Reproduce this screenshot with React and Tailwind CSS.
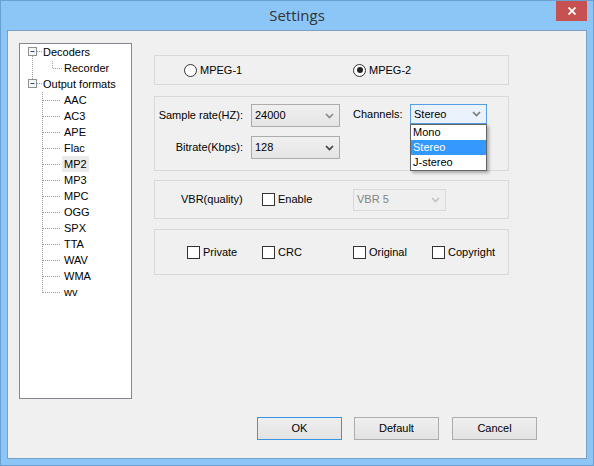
import React from "react";

function Chevron({ color = "#3f3f3f" }) {
  return (
    <svg width="9" height="6" viewBox="0 0 9 6">
      <path d="M1 1 L4.5 4.5 L8 1" fill="none" stroke={color} strokeWidth="1.7" />
    </svg>
  );
}

function Checkbox() {
  return <span className="block w-[13px] h-[13px] border border-[#333333] bg-white shrink-0" />;
}

function Radio({ checked }) {
  return (
    <span className="flex w-[13px] h-[13px] rounded-full border border-[#333333] bg-white shrink-0 items-center justify-center">
      {checked ? <span className="block w-[6px] h-[6px] rounded-full bg-[#222222]" /> : null}
    </span>
  );
}

function TreeLines() {
  const kids = [];
  for (let i = 3; i <= 15; i++) {
    const y = 8 + 16 * i + 0.5;
    kids.push(<line key={i} x1="23" y1={y} x2="41" y2={y} />);
  }
  return (
    <svg className="absolute left-0 top-0" width="111" height="354" viewBox="0 0 111 354">
      <g stroke="#9a9a9a" strokeWidth="1" strokeDasharray="1 1" fill="none">
        <line x1="12.5" y1="12" x2="12.5" y2="35" />
        <line x1="17" y1="7.5" x2="22" y2="7.5" />
        <line x1="17" y1="39.5" x2="22" y2="39.5" />
        <line x1="32.5" y1="17" x2="32.5" y2="25" />
        <line x1="33" y1="24.5" x2="43" y2="24.5" />
        <line x1="22.5" y1="48" x2="22.5" y2="249" />
        {kids}
      </g>
      <rect x="8.5" y="3.5" width="8" height="8" fill="#f6f6f6" stroke="#8e8f8f" />
      <line x1="10.5" y1="7.5" x2="14.5" y2="7.5" stroke="#2b4f84" />
      <rect x="8.5" y="35.5" width="8" height="8" fill="#f6f6f6" stroke="#8e8f8f" />
      <line x1="10.5" y1="39.5" x2="14.5" y2="39.5" stroke="#2b4f84" />
    </svg>
  );
}

const formats = ["AAC", "AC3", "APE", "Flac", "MP2", "MP3", "MPC", "OGG", "SPX", "TTA", "WAV", "WMA", "wv"];

export default function App() {
  return (
    <div className="w-[594px] h-[466px] bg-[#8bc6f6] border border-[#6a9fd2] flex flex-col font-['Liberation_Sans',Arial,sans-serif] text-[11px] text-black">
      {/* title bar */}
      <div className="h-[29px] flex items-start shrink-0">
        <div className="w-[37px] shrink-0" />
        <div className="flex-1 text-center pt-[4px] text-[15px] leading-[20px] text-[#333333] font-['Open_Sans',sans-serif]">Settings</div>
        <div className="w-[31px] h-[20px] bg-[#c75050] flex items-center justify-center shrink-0">
          <svg width="8" height="8" viewBox="0 0 8 8">
            <path d="M0.5 0.5 L7.5 7.5 M7.5 0.5 L0.5 7.5" stroke="#ffffff" strokeWidth="1.8" />
          </svg>
        </div>
        <div className="w-[6px] shrink-0" />
      </div>

      {/* client area */}
      <div className="ml-[6px] w-[580px] h-[429px] border border-[#7b9fc3] bg-[#f0f0f0] flex flex-col">
        <div className="flex items-start pt-[12px] pl-[11px]">
          {/* tree */}
          <div className="relative w-[113px] h-[356px] border border-[#828790] bg-white shrink-0">
            <TreeLines />
            <div className="relative flex flex-col leading-[16px]">
              <div className="h-[16px] pl-[23px]">Decoders</div>
              <div className="h-[16px] pl-[44px]">Recorder</div>
              <div className="h-[16px] pl-[23px]">Output formats</div>
              {formats.map((f) => (
                <div key={f} className="h-[16px] pl-[42px] flex">
                  <span className={f === "MP2" ? "px-[2px] bg-[#ebebeb]" : "px-[2px]"}>{f}</span>
                </div>
              ))}
            </div>
          </div>

          {/* right column */}
          <div className="ml-[22px] mt-[12px] w-[355px] flex flex-col">
            {/* group 1 */}
            <div className="h-[30px] border border-[#d9d9d9] flex items-center">
              <div className="w-[198px] pl-[29px] flex items-center gap-[3px]">
                <Radio />
                <span>MPEG-1</span>
              </div>
              <div className="flex items-center gap-[3px]">
                <Radio checked />
                <span>MPEG-2</span>
              </div>
            </div>

            {/* group 2 */}
            <div className="mt-[11px] h-[75px] border border-[#d9d9d9] flex flex-col pt-[7px]">
              <div className="flex items-start">
                <div className="w-[88px] h-[23px] leading-[23px] text-right">Sample rate(HZ):</div>
                <div className="ml-[8px] w-[89px] h-[23px] border border-[#acacac] bg-linear-to-b from-[#f0f0f0] to-[#e5e5e5] flex items-center justify-between pl-[3px] pr-[5px]">
                  <span>24000</span>
                  <Chevron color="#8a8a8a" />
                </div>
                <div className="ml-[13px] w-[57px] h-[21px] leading-[21px]">Channels:</div>
                <div className="relative w-[77px]">
                  <div className="h-[20px] border border-[#569de5] bg-[#eaf2fb] flex items-center justify-between pl-[3px] pr-[5px]">
                    <span>Stereo</span>
                    <Chevron color="#7a7a7a" />
                  </div>
                  <div className="absolute left-0 top-full w-[77px] border border-[#646464] bg-white shadow-[2px_2px_3px_rgba(0,0,0,0.3)] z-10 flex flex-col leading-[15px]">
                    <div className="h-[15px] pl-[2px]">Mono</div>
                    <div className="h-[15px] pl-[2px] bg-[#3399ff] text-white">Stereo</div>
                    <div className="h-[15px] pl-[2px]">J-stereo</div>
                  </div>
                </div>
              </div>
              <div className="flex items-start mt-[9px]">
                <div className="w-[88px] h-[23px] leading-[23px] text-right">Bitrate(Kbps):</div>
                <div className="ml-[8px] w-[89px] h-[23px] border border-[#acacac] bg-linear-to-b from-[#f0f0f0] to-[#e5e5e5] flex items-center justify-between pl-[3px] pr-[5px]">
                  <span>128</span>
                  <Chevron />
                </div>
              </div>
            </div>

            {/* group 3 */}
            <div className="mt-[9px] h-[39px] border border-[#d9d9d9] flex items-center pl-[26px]">
              <div className="w-[81px]">VBR(quality)</div>
              <div className="w-[91px] flex items-center gap-[3px]">
                <Checkbox />
                <span>Enable</span>
              </div>
              <div className="w-[93px] h-[22px] border border-[#d9d9d9] bg-[#efefef] flex items-center justify-between pl-[3px] pr-[5px] text-[#838383]">
                <span>VBR 5</span>
                <Chevron color="#c4c4c4" />
              </div>
            </div>

            {/* group 4 */}
            <div className="mt-[10px] h-[46px] border border-[#d9d9d9] flex items-center pl-[32px]">
              <div className="w-[75px] flex items-center gap-[3px]">
                <Checkbox />
                <span>Private</span>
              </div>
              <div className="w-[91px] flex items-center gap-[3px]">
                <Checkbox />
                <span>CRC</span>
              </div>
              <div className="w-[79px] flex items-center gap-[3px]">
                <Checkbox />
                <span>Original</span>
              </div>
              <div className="flex items-center gap-[3px]">
                <Checkbox />
                <span>Copyright</span>
              </div>
            </div>
          </div>
        </div>

        {/* buttons */}
        <div className="mt-[18px] pl-[249px] flex items-center">
          <div className="w-[85px] h-[23px] border border-[#3c94e6] bg-linear-to-b from-[#efefef] to-[#e3e3e3] flex items-center justify-center">OK</div>
          <div className="ml-[12px] w-[85px] h-[23px] border border-[#adadad] bg-linear-to-b from-[#efefef] to-[#e3e3e3] flex items-center justify-center">Default</div>
          <div className="ml-[13px] w-[85px] h-[23px] border border-[#adadad] bg-linear-to-b from-[#efefef] to-[#e3e3e3] flex items-center justify-center">Cancel</div>
        </div>
      </div>
    </div>
  );
}
